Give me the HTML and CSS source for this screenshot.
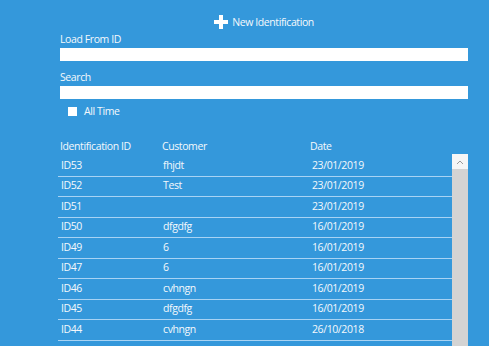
FILE: index.html
```html
<!DOCTYPE html>
<html lang="en">
<head>
  <meta charset="UTF-8" />
  <title>Identifications</title>
  <link rel="stylesheet" href="styles.css">
</head>
<body>
  <div class="page">
    <div class="top-bar">
      <button class="new-btn">
        <svg class="plus" viewBox="0 0 14 14" width="14" height="14">
          <path d="M5 0h4v5h5v4H9v5H5V9H0V5h5z" fill="#fff"/>
        </svg>
        New Identification
      </button>
    </div>

    <label class="field-label">Load From ID</label>
    <input class="field" type="text">

    <label class="field-label search-label">Search</label>
    <input class="field" type="text">

    <div class="check-row">
      <span class="check"></span>
      <span>All Time</span>
    </div>

    <div class="list">
      <div class="list-head">
        <span>Identification ID</span>
        <span>Customer</span>
        <span>Date</span>
      </div>
      <div class="list-body">
        <div class="rows">
          <div class="row"><span>ID53</span><span>fhjdt</span><span>23/01/2019</span></div>
          <div class="row"><span>ID52</span><span>Test</span><span>23/01/2019</span></div>
          <div class="row"><span>ID51</span><span></span><span>23/01/2019</span></div>
          <div class="row"><span>ID50</span><span>dfgdfg</span><span>16/01/2019</span></div>
          <div class="row"><span>ID49</span><span>6</span><span>16/01/2019</span></div>
          <div class="row"><span>ID47</span><span>6</span><span>16/01/2019</span></div>
          <div class="row"><span>ID46</span><span>cvhngn</span><span>16/01/2019</span></div>
          <div class="row"><span>ID45</span><span>dfgdfg</span><span>16/01/2019</span></div>
          <div class="row"><span>ID44</span><span>cvhngn</span><span>26/10/2018</span></div>
        </div>
        <div class="scrollbar">
          <div class="scroll-up">
            <svg viewBox="0 0 8 6" width="8" height="6">
              <path d="M1 5l3-3 3 3" fill="none" stroke="#9a9a9a" stroke-width="1"/>
            </svg>
          </div>
        </div>
      </div>
    </div>
  </div>
</body>
</html>
```

FILE: styles.css
```css
html, body {
  margin: 0;
  padding: 0;
  height: 100%;
  overflow: hidden;
  background: #3498db;
  color: #f4f8fc;
  font-family: 'Open Sans', sans-serif;
  font-size: 10.5px;
  letter-spacing: -0.4px;
}

.page {
  display: flex;
  flex-direction: column;
  padding: 14px 21px 0 60px;
}

.top-bar {
  display: flex;
  justify-content: center;
  margin-bottom: 3px;
}

.new-btn {
  display: flex;
  align-items: center;
  gap: 4px;
  background: none;
  border: none;
  padding: 0;
  color: #f4f8fc;
  font: inherit;
  letter-spacing: inherit;
}

.plus {
  margin-top: 1px;
}

.field-label {
  line-height: 14px;
  margin-bottom: 2px;
}

.search-label {
  margin-top: 9px;
}

.field {
  height: 13px;
  border: none;
  padding: 0;
  margin: 0;
  background: #fff;
  outline: none;
}

.check-row {
  display: flex;
  align-items: center;
  gap: 7px;
  margin: 5px 0 0 8px;
  line-height: 14px;
}

.check {
  width: 9px;
  height: 9px;
  background: #fff;
}

.list {
  margin: 21px 0 0 -2px;
  display: flex;
  flex-direction: column;
}

.list-head,
.row {
  display: grid;
  grid-template-columns: 102px 148px 1fr;
}

.list-head {
  padding-left: 2px;
  line-height: 14px;
  margin-bottom: 1px;
}

.list-body {
  display: flex;
}

.rows {
  width: 398px;
  padding-top: 2px;
}

.row {
  height: 19.5px;
  align-items: center;
  padding-left: 3px;
  border-bottom: 1px solid #a8d3f4;
}

.row span {
  margin-top: -2px;
}

.row span:nth-child(3) {
  padding-left: 1px;
}

.scrollbar {
  width: 16px;
  height: 200px;
  background: #d3d3d3;
}

.scroll-up {
  height: 15px;
  background: #f6f6f6;
  display: flex;
  align-items: center;
  justify-content: center;
}
```
